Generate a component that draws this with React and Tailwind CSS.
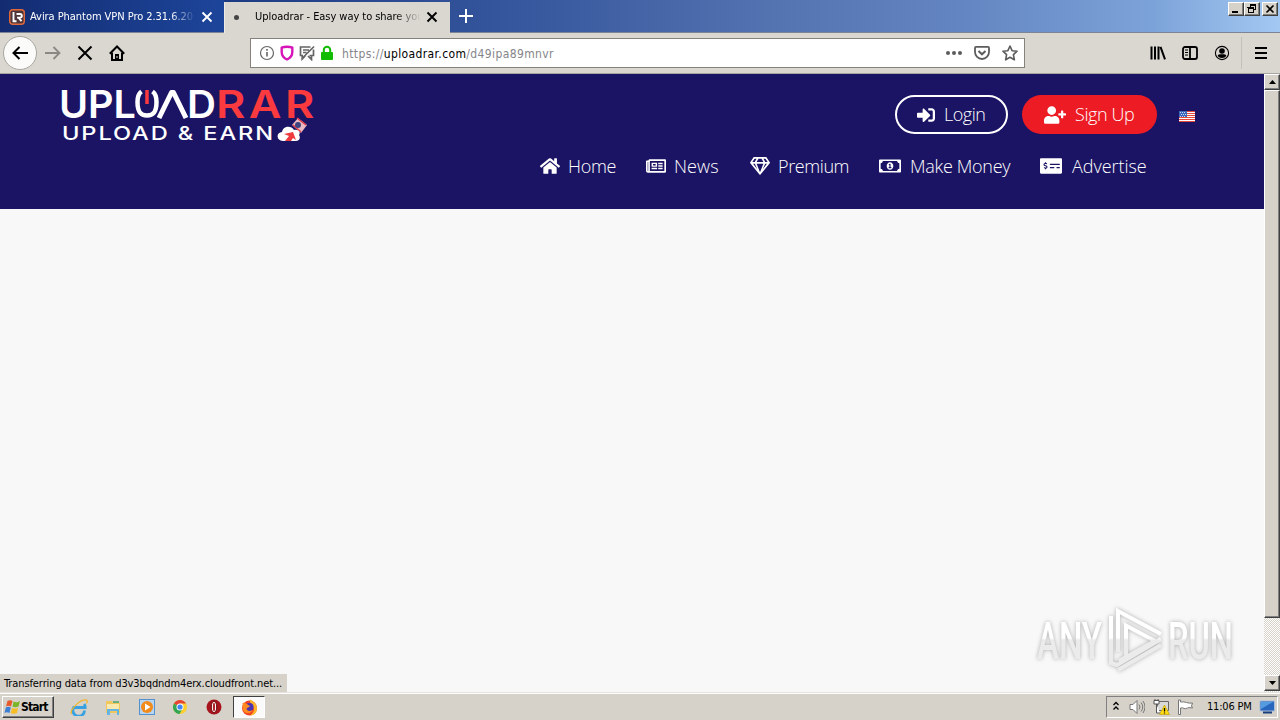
import React from 'react';
import { FaHome, FaRegNewspaper, FaRegGem, FaRegMoneyBillAlt, FaMoneyCheckAlt, FaSignInAlt, FaUserPlus } from 'react-icons/fa';

const raised = 'bg-[#d6d2ca] border border-t-white border-l-white border-r-[#404040] border-b-[#404040] shadow-[inset_-1px_-1px_0_#808080]';

const CloseIcon = ({ color }) => (
  <svg width="12" height="12" viewBox="0 0 12 12" className="shrink-0">
    <path d="M1.5 1.5l9 9M10.5 1.5l-9 9" stroke={color} strokeWidth="1.9" />
  </svg>
);

const WindowButtons = () => (
  <div className="ml-auto flex pt-[2px] pr-[2px]">
    <div className={`w-4 h-[14px] ${raised}`}>
      <svg width="14" height="12" viewBox="0 0 14 12"><path d="M3 8h6v2H3z" /></svg>
    </div>
    <div className={`w-4 h-[14px] ${raised}`}>
      <svg width="14" height="12" viewBox="0 0 14 12" fill="none" stroke="#000" shapeRendering="crispEdges">
        <path d="M5 1.5h6M5.5 2v2M10.5 2v4.500H9M5 2.500h6M3 4.500h5.500v5h-5zM3 5.500h6" />
      </svg>
    </div>
    <div className={`w-4 h-[14px] ml-[2px] ${raised}`}>
      <svg width="14" height="12" viewBox="0 0 14 12"><path d="M3.500 2.500l7 7M10.500 2.500l-7 7" stroke="#000" strokeWidth="1.600" /></svg>
    </div>
  </div>
);

const TabStrip = () => (
  <div className="h-[33px] flex bg-[linear-gradient(90deg,#0c2467_0%,#1c3b83_18%,#33539b_38%,#5272b0_60%,#6385c1_75%,#7ca3d9_90%,#a3c8f2_100%)] border-b border-[#7d8496]">
    <div className="w-[224px] h-8 flex items-center bg-[linear-gradient(90deg,#132c71,#1d459a)] pl-[9px] pr-[11px] pt-[2px]">
      <svg width="16" height="16" viewBox="0 0 16 16" className="shrink-0">
        <rect x=".7" y=".7" width="14.600" height="14.600" rx="3" fill="#50363a" stroke="#e2693a" strokeWidth="1.400" />
        <path d="M4.500 3v9.200h3M7.500 5h3.500a1.800 1.800 0 010 3.600H8M9.500 8.600l3 3.600" fill="none" stroke="#fff" strokeWidth="1.900" />
      </svg>
      <span className="ml-[5px] w-[166px] overflow-hidden whitespace-nowrap text-[11px] tracking-[-0.05px] text-white [mask-image:linear-gradient(90deg,#000_84%,transparent)]">Avira Phantom VPN Pro 2.31.6.20</span>
      <span className="ml-auto flex"><CloseIcon color="#fff" /></span>
    </div>
    <div className="w-[226px] h-[32px] mt-[2px] -mb-px flex items-center bg-[#dad6d0] border-l border-[#eeeae5] pl-[9px] pr-[12px] pb-[2px]">
      <span className="w-[5px] h-[5px] rounded-full bg-[#444]" />
      <span className="ml-[16px] w-[166px] overflow-hidden whitespace-nowrap text-[11px] tracking-[-0.05px] text-black [mask-image:linear-gradient(90deg,#000_84%,transparent)]">Uploadrar - Easy way to share you</span>
      <span className="ml-auto flex"><CloseIcon color="#000" /></span>
    </div>
    <svg width="16" height="16" viewBox="0 0 16 16" className="ml-2 mt-2">
      <path d="M8 1v14M1 8h14" stroke="#fff" strokeWidth="2" />
    </svg>
    <WindowButtons />
  </div>
);

const UrlIcons = () => (
  <div className="flex items-center gap-1">
    <svg width="16" height="16" viewBox="0 0 16 16" fill="none" stroke="#666">
      <circle cx="8" cy="8" r="6.500" strokeWidth="1.200" />
      <path d="M8 7v4.500M8 4v1.700" strokeWidth="1.600" />
    </svg>
    <svg width="16" height="16" viewBox="0 0 16 16" fill="none" stroke="#d714b8" strokeWidth="2.400">
      <path d="M8 1.700c2 0 4 .4 5.300 1V7c0 4-2 6-5.300 7.500C4.700 13 2.700 11 2.700 7V2.700C4 2.100 6 1.700 8 1.700z" />
    </svg>
    <svg width="16" height="16" viewBox="0 0 16 16" fill="none" stroke="#666" strokeWidth="1.700">
      <path d="M11.500 2H1.500v8.500h1.700V14l3-3.200M4 5h6M4 7.500h3.500M15 1.500L2.500 14M14.500 4.500v6h-4M9 11l3.500 3.500v-4" />
    </svg>
    <svg width="16" height="16" viewBox="0 0 16 16">
      <path d="M4.800 8V5a3.200 3.200 0 016.400 0v3" fill="none" stroke="#12bc00" strokeWidth="2" />
      <rect x="2" y="7" width="12" height="8" rx="1" fill="#12bc00" />
    </svg>
  </div>
);

const Toolbar = () => (
  <div className="h-[41px] flex items-center bg-[#dad6d0] border-b border-[#a8a4a0] px-[3px]">
    <div className="w-[34px] h-[34px] rounded-full bg-[#fbfbfa] border border-[#aaa69f] flex items-center justify-center">
      <svg width="18" height="16" viewBox="0 0 18 16" fill="none" stroke="#000" strokeWidth="2"><path d="M17 8H2.500M8.500 2L2.500 8l6 6" /></svg>
    </div>
    <svg width="18" height="16" viewBox="0 0 18 16" fill="none" stroke="#8b8884" strokeWidth="1.800" className="ml-[7px]"><path d="M1 8h14.500M9.500 2l6 6-6 6" /></svg>
    <svg width="16" height="16" viewBox="0 0 16 16" className="ml-[15px]"><path d="M1.500 1.500l13 13M14.500 1.500l-13 13" stroke="#000" strokeWidth="2" /></svg>
    <svg width="16" height="16" viewBox="0 0 16 16" fill="none" stroke="#000" strokeWidth="2" className="ml-4">
      <path d="M.8 8.700L8 1.500l7.200 7.200" />
      <path d="M3 7.500V15h10V7.500" />
      <path d="M6 9h4v5H6z" fill="#000" stroke="none" /><path d="M7.500 11h1v2h-1z" stroke="none" fill="#dad6d0" />
    </svg>
    <div className="ml-[125px] w-[775px] h-[30px] bg-white border border-[#85827e] flex items-center pl-[8px] pr-[6px]">
      <UrlIcons />
      <div className="ml-[7px] pt-px text-[12px] text-[#85858a] tracking-[0.38px]">https://<span className="text-black">uploadrar.com</span>/d49ipa89mnvr</div>
      <div className="ml-auto flex items-center gap-3 text-[#5c5c5c]">
        <svg width="16" height="16" viewBox="0 0 16 16" fill="currentColor"><circle cx="2" cy="8" r="2" /><circle cx="8" cy="8" r="2" /><circle cx="14" cy="8" r="2" /></svg>
        <svg width="16" height="16" viewBox="0 0 16 16" fill="none" stroke="currentColor" strokeWidth="1.800">
          <path d="M2 1.900h12c.6 0 1 .4 1 1V7a7 7 0 01-14 0V2.900c0-.6.400-1 1-1z" /><path d="M4.500 6L8 9.300 11.500 6" strokeWidth="2" />
        </svg>
        <svg width="16" height="16" viewBox="0 0 16 16" fill="none" stroke="currentColor" strokeWidth="1.600" strokeLinejoin="round">
          <path d="M8 1l2.100 4.700 5 .5-3.700 3.500 1 5.100L8 12.200l-4.400 2.600 1-5.100L.9 6.200l5-.5z" />
        </svg>
      </div>
    </div>
    <div className="ml-auto flex items-center">
      <svg width="16" height="16" viewBox="0 0 16 16" fill="none" stroke="#000" strokeWidth="2"><path d="M1.500 1.500v13M5 1.500v13M8.500 1.500v13M10.500 1.800l4.500 12.500" /></svg>
      <svg width="16" height="16" viewBox="0 0 16 16" fill="none" stroke="#000" strokeWidth="1.800" className="ml-4">
        <rect x="1" y="2" width="14" height="12" rx="2" /><path d="M8 2v12" /><path d="M3 5h3M3 7.500h3M3 10h3" strokeWidth="1" />
      </svg>
      <svg width="16" height="16" viewBox="0 0 16 16" className="ml-4">
        <circle cx="8" cy="8" r="6.600" fill="none" stroke="#000" strokeWidth="1.100" />
        <circle cx="8" cy="6" r="2.800" /><path d="M3.700 10.500c1-1.500 2.800-1.200 4.300-1.200s3.300-.3 4.300 1.200C11.500 12.300 10 13 8 13s-3.500-.7-4.300-2.500z" />
      </svg>
      <span className="ml-[11px] w-px h-8 bg-[#c4c0ba]" />
      <svg width="14" height="14" viewBox="0 0 14 14" className="ml-[12px] mr-[9px]"><path d="M1 2h12M1 7h12M1 12h12" stroke="#000" strokeWidth="2" /></svg>
    </div>
  </div>
);

// wordmark with the power button standing in for the O
const Logo = () => (
  <svg width="260" height="72" viewBox="0 -10 260 72" className="shrink-0">
    <g fontFamily="Inter, sans-serif" fontWeight="600" fill="#fff">
      <text x="-2" y="31" fontSize="38" textLength="77" lengthAdjust="spacingAndGlyphs">UPL</text>
      <text x="126" y="31" fontSize="38" textLength="29" lengthAdjust="spacingAndGlyphs">D</text>
      <text x="155" y="31" fontSize="38" fill="#fb3a3f" letterSpacing="3" textLength="102" lengthAdjust="spacingAndGlyphs">RAR</text>
      <text x="1" y="53" fontSize="19" fontWeight="500" letterSpacing="1.500" textLength="213" lengthAdjust="spacingAndGlyphs">UPLOAD &amp; EARN</text>
    </g>
    <path d="M80.500 4.500c-3.500 2.500-4 6-4 10.500 0 9 2.500 13.500 9.500 13.500s9.500-4.500 9.500-13.500c0-4.500-.5-8-4-10.500" fill="none" stroke="#fff" strokeWidth="4.500" />
    <path d="M86 3v14" stroke="#fb3a3f" strokeWidth="3.500" />
    <path d="M98 31L110.500 5.500h2L125 31" fill="none" stroke="#fff" strokeWidth="5" strokeLinejoin="round" />
    <path d="M231 38l6-7 9 7-6 8z" fill="#e9b9c4" />
    <path d="M236 31l9 7M232 38l8 7" stroke="#e23b45" strokeWidth="1.500" />
    <circle cx="237" cy="38" r="3" fill="#3d4580" />
    <path d="M222 54c-7 0-7-9-1-9 1-6 9-7 12-2 5-1 7 3 5 5 2 3 0 6-3 6z" fill="#fff" />
    <path d="M223 47l9-2 3 8-3-2-2 3h-6l4-5z" fill="#ed3b3f" />
  </svg>
);

const Flag = () => (
  <svg width="16" height="11" viewBox="0 0 16 11" shapeRendering="crispEdges">
    <rect width="16" height="11" fill="#fff" />
    <g fill="#e4483c">
      <rect width="16" height="1" /><rect y="2" width="16" height="1" /><rect y="4" width="16" height="1" />
      <rect y="6" width="16" height="1" /><rect y="8" width="16" height="1" /><rect y="10" width="16" height="1" />
    </g>
    <rect width="8" height="6" fill="#3c69bb" />
    <path d="M1 1.500h6M2 3.500h6M1 5.500h6" stroke="#c5d5f2" strokeDasharray="1 1" />
  </svg>
);

const NavItem = ({ icon: Icon, label, className, size, textClass }) => (
  <div className={`flex items-center whitespace-nowrap ${className}`}>
    <Icon size={size} />
    <span className={textClass}>{label}</span>
  </div>
);

const SiteHeader = () => (
  <div className="h-[135px] bg-[#1b1464] flex text-white pl-[61px] pt-[3px]">
    <Logo />
    <div className="ml-auto mr-[69px] pt-[18px] w-[664px] font-['Open_Sans',sans-serif] font-light text-[18px]">
      <div className="flex items-center justify-end">
        <div className="w-[113px] h-[39px] rounded-full border-2 border-white flex items-center pl-[20px]">
          <FaSignInAlt size={18} />
          <span className="ml-[9px] tracking-[-0.5px]">Login</span>
        </div>
        <div className="ml-[14px] w-[135px] h-[39px] rounded-full bg-[#ed1c24] flex items-center pl-[22px]">
          <FaUserPlus size={22} />
          <span className="ml-[9px] tracking-[-0.4px]">Sign Up</span>
        </div>
        <div className="ml-[22px] pt-1"><Flag /></div>
      </div>
      <div className="flex items-center h-7 mt-[18px] pl-[9px]">
        <NavItem icon={FaHome} label="Home" size={20} className="w-[106px]" textClass="ml-[8px] tracking-[-0.3px]" />
        <NavItem icon={FaRegNewspaper} label="News" size={20} className="w-[104px]" textClass="ml-[8px] tracking-[0.1px]" />
        <NavItem icon={FaRegGem} label="Premium" size={20} className="w-[129px]" textClass="ml-[8px] tracking-[-0.4px]" />
        <NavItem icon={FaRegMoneyBillAlt} label="Make Money" size={22} className="w-[161px]" textClass="ml-[9px] tracking-[-0.3px]" />
        <NavItem icon={FaMoneyCheckAlt} label="Advertise" size={22} className="" textClass="ml-[10px] tracking-[-0.05px]" />
      </div>
    </div>
  </div>
);

const Scrollbar = () => (
  <div className="w-4 flex flex-col bg-[repeating-conic-gradient(#d6d2ca_0_25%,#fff_0_50%)] bg-[length:2px_2px]">
    <div className={`h-4 flex items-center justify-center ${raised}`}>
      <svg width="7" height="4" viewBox="0 0 7 4"><path d="M3.500 0L7 4H0z" /></svg>
    </div>
    <div className={`h-[528px] ${raised}`} />
    <div className={`mt-auto mb-px h-4 flex items-center justify-center ${raised}`}>
      <svg width="7" height="4" viewBox="0 0 7 4"><path d="M0 0h7L3.500 4z" /></svg>
    </div>
  </div>
);

const Watermark = () => (
  <div className="absolute right-[45px] bottom-[18px] w-[200px] h-[68px]">
    <svg width="200" height="68" viewBox="0 0 200 68" className="drop-shadow-[0_0_2px_rgba(0,0,0,0.3)]">
      <defs>
        <linearGradient id="wm" gradientUnits="userSpaceOnUse" x1="0" y1="0" x2="0" y2="68">
          <stop offset="0.47" stopColor="#fff" />
          <stop offset="0.5" stopColor="#ebebeb" />
        </linearGradient>
      </defs>
      <g fontFamily="Roboto, sans-serif" fontWeight="500" fontSize="51" fill="url(#wm)">
        <text x="2" y="53" textLength="65" lengthAdjust="spacingAndGlyphs">ANY</text>
        <text x="133" y="53" textLength="65" lengthAdjust="spacingAndGlyphs">RUN</text>
      </g>
      <g fill="none" stroke="url(#wm)" strokeWidth="4">
        <path d="M91 53V19.500L120 35 84 55" />
        <path d="M83 46V5l43 23" />
        <path d="M76 10v47l6 2 44-26" />
        <path d="M83 64l43-25" />
      </g>
    </svg>
  </div>
);

const PageArea = () => (
  <div className="h-[618px] flex relative">
    <div className="flex-1 bg-[#f8f8f8]">
      <SiteHeader />
    </div>
    <Scrollbar />
    <Watermark />
    <div className="absolute left-0 bottom-0 w-[287px] h-[18px] bg-[#d6d2ca] pl-[4px] pt-px text-[11px] leading-[18px] whitespace-nowrap tracking-[-0.1px] text-black">
      Transferring data from d3v3bqdndm4erx.cloudfront.net...
    </div>
  </div>
);

const WindowsLogo = () => (
  <svg width="17" height="16" viewBox="0 0 16 16">
    <path d="M3 2c2-1 3.500-1 5 0L6.500 7.500c-2-1-3.500-.8-5 0z" fill="#e8592b" />
    <path d="M9 2.500c2 1 4 1 6.500-.5L14 7.500c-2 1-4 1-6 .3z" fill="#7cb52b" />
    <path d="M1.300 8.500c2-1 3.500-.8 5 0L5 14c-2-1-3.500-.8-5 0z" fill="#3c7fd4" />
    <path d="M7.500 9c2 .8 4 .8 6-.3L12.500 14c-2 1-4 1-6.300.3z" fill="#f6bd24" />
  </svg>
);

const QuickLaunch = () => (
  <>
    <svg width="18" height="18" viewBox="0 0 18 18" className="ml-[16px]">
      <path d="M14.500 12.500A5.800 5.800 0 113.700 9.500h11.500a6 6 0 00-1-3.500" fill="none" stroke="#37a1e2" strokeWidth="2.800" />
      <path d="M1.500 16C-.5 12 10 1 16.500 2c1 .3.800 2 0 3.500" fill="none" stroke="#f0b62c" strokeWidth="1.300" />
    </svg>
    <svg width="18" height="18" viewBox="0 0 18 18" className="ml-[16px]">
      <path d="M2 3h6l1 2h7v10H2z" fill="#efc75c" /><path d="M3 6h12v6H3z" fill="#fae9ae" />
      <path d="M3 17v-6h12v6h-2v-4H6v4z" fill="#64b5e3" /><path d="M9 3h6v2H9z" fill="#6cae7e" />
    </svg>
    <svg width="18" height="18" viewBox="0 0 18 18" className="ml-[16px]">
      <rect x="1.500" y="1.500" width="15" height="15" fill="#b6d5f0" stroke="#5691cf" />
      <circle cx="9" cy="9" r="6" fill="#f28a1c" /><path d="M7 5.500l5.500 3.500L7 12.500z" fill="#fff" />
    </svg>
    <svg width="16" height="16" viewBox="0 0 16 16" className="ml-[16px]">
      <circle cx="8" cy="8" r="7" fill="#fccf2e" />
      <path d="M8 8L1.900 4.600A7 7 0 0114 4.500H8z" fill="#e44335" /><path d="M8 8L1.900 4.500A7 7 0 007.500 15l3-5z" fill="#34a652" />
      <circle cx="8" cy="8" r="3.500" fill="#fff" /><circle cx="8" cy="8" r="2.600" fill="#4285f4" />
    </svg>
    <svg width="16" height="16" viewBox="0 0 16 16" className="ml-[18px]">
      <circle cx="8" cy="8" r="7.500" fill="#a7141b" /><ellipse cx="8" cy="8" rx="2.700" ry="5.800" fill="#fff" stroke="#6d0d12" />
      <ellipse cx="8" cy="8" rx="1.100" ry="4.500" fill="#b3222a" />
    </svg>
  </>
);

const FirefoxIcon = () => (
  <svg width="17" height="17" viewBox="0 0 17 17">
    <circle cx="8.500" cy="9" r="7.500" fill="#f5421f" />
    <path d="M9 .5c4 2 7 4.500 7 9 0 4-3 7-7 7 4-3 5-6 3-9S8 3 9 .5z" fill="#fdb52b" />
    <circle cx="8.500" cy="8" r="4" fill="#4a36b5" />
    <path d="M1.500 4C5 3 6 6 9 7c-1 2-3 1-3.500 3C7 13 10 12 12 11c-2 4-8 4.500-10 0z" fill="#ff8b20" />
  </svg>
);

const Tray = () => (
  <div className="ml-auto mr-[2px] w-[172px] h-[22px] border border-t-[#808080] border-l-[#808080] border-r-white border-b-white flex items-center pl-[5px]">
    <svg width="8" height="10" viewBox="0 0 8 10" fill="none" stroke="#000" strokeWidth="1.300" className="-mt-[3px]"><path d="M1.500 4L4 1.500 6.500 4M1.500 8.500L4 6l2.500 2.500" /></svg>
    <svg width="16" height="16" viewBox="0 0 16 16" fill="none" stroke="#777" className="ml-[9px]">
      <path d="M1 5.500h3l4-4v13l-4-4H1z" fill="#fff" /><path d="M10 5.500q2 2.500 0 5M12 3.500q3.500 4.500 0 9M14 2q4 6 0 12" />
    </svg>
    <svg width="17" height="16" viewBox="0 0 17 16" className="ml-[8px]">
      <path d="M4.500 2.500h11v9h-11z" fill="#d9d9d9" stroke="#666" /><path d="M1 1.500h5V5H1zM3.500 5v9H7M2 0v2M5 0v2" fill="#fff" stroke="#555" />
      <path d="M11.500 6l5 9.500h-10z" fill="#ffdc13" stroke="#b99600" strokeWidth=".6" /><path d="M11.500 9v3.500M11.500 13.500v1" stroke="#000" strokeWidth="1.300" />
    </svg>
    <svg width="16" height="16" viewBox="0 0 16 16" fill="#fff" stroke="#777" className="ml-[7px]"><path d="M1.500 1v14.500h2V9c3-1 4 2 7 0 2-1 3 0 5 0l-1-2 1-3c-5 1-7-2-12-1V1z" /></svg>
    <span className="ml-[14px] text-[11px] tracking-[-0.2px] whitespace-nowrap">11:06 PM</span>
    <svg width="17" height="14" viewBox="0 0 17 14" className="ml-auto mr-[1px]">
      <path d="M1 1h14.500v10H1z" fill="#2865bd" stroke="#a9bfdb" /><path d="M2 2h12L2 9z" fill="#559be0" /><path d="M4 12.500h9" stroke="#173d7d" strokeWidth="2" />
    </svg>
  </div>
);

const Taskbar = () => (
  <div className="h-7 bg-[#d6d2ca] border-t border-[#e5e1db] shadow-[inset_0_1px_0_#fff] flex items-center pl-[2px] pt-px text-black">
    <div className={`w-[52px] h-[22px] flex items-center pl-px ${raised}`}>
      <WindowsLogo />
      <span className="font-bold text-[12px] tracking-[-0.8px]">Start</span>
    </div>
    <QuickLaunch />
    <div className="ml-[11px] w-[32px] h-[22px] bg-[#fafafa] border border-t-[#404040] border-l-[#404040] border-r-white border-b-white flex items-center justify-center">
      <FirefoxIcon />
    </div>
    <Tray />
  </div>
);

export default function App() {
  return (
    <div className="w-[1280px] h-[720px] overflow-hidden flex flex-col font-['DejaVu_Sans_Condensed','DejaVu_Sans',sans-serif]">
      <TabStrip />
      <Toolbar />
      <PageArea />
      <Taskbar />
    </div>
  );
}
